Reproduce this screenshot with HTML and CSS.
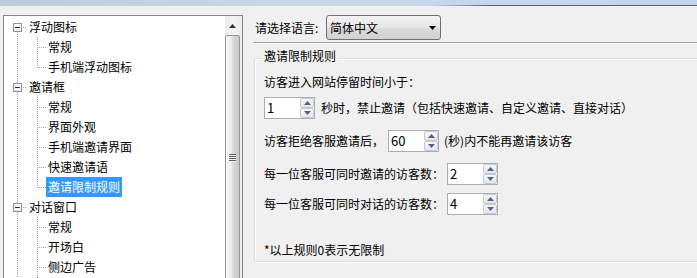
FILE: index.html
```html
<!DOCTYPE html>
<html lang="zh-CN">
<head>
    <meta charset="UTF-8">
    <title>邀请限制规则</title>
    <link rel="stylesheet" href="styles.css">
</head>
<body>
    <div class="titlebar"></div>
    <div class="main">
        <div class="treebox">
            <ul class="tree">
                <li class="root">
                    <div class="row"><span class="toggle"></span><span class="dash"></span><span class="label">浮动图标</span></div>
                    <ul class="children">
                        <li><span class="label">常规</span></li>
                        <li><span class="label">手机端浮动图标</span></li>
                    </ul>
                </li>
                <li class="root">
                    <div class="row"><span class="toggle"></span><span class="dash"></span><span class="label">邀请框</span></div>
                    <ul class="children">
                        <li><span class="label">常规</span></li>
                        <li><span class="label">界面外观</span></li>
                        <li><span class="label">手机端邀请界面</span></li>
                        <li><span class="label">快速邀请语</span></li>
                        <li class="selected"><span class="label">邀请限制规则</span></li>
                    </ul>
                </li>
                <li class="root">
                    <div class="row"><span class="toggle"></span><span class="dash"></span><span class="label">对话窗口</span></div>
                    <ul class="children more">
                        <li><span class="label">常规</span></li>
                        <li><span class="label">开场白</span></li>
                        <li><span class="label">侧边广告</span></li>
                    </ul>
                </li>
            </ul>
            <div class="scrollbar">
                <div class="sb-up">
                    <svg width="7" height="4" viewBox="0 0 7 4"><path d="M0 4H7L3.5 0Z" fill="#333"/></svg>
                </div>
                <div class="sb-thumb"><span class="grip"></span></div>
            </div>
        </div>

        <div class="pane">
            <div class="lang-row">
                <span class="lang-label">请选择语言:</span>
                <div class="select">
                    <span>简体中文</span>
                    <svg class="caret" width="7" height="4" viewBox="0 0 7 4"><path d="M0 0H7L3.5 4Z" fill="#000"/></svg>
                </div>
            </div>
            <div class="sep"></div>

            <fieldset class="group">
                <legend>邀请限制规则</legend>
                <div class="line first">访客进入网站停留时间小于：</div>
                <div class="line stay">
                    <div class="spin">
                        <span class="val">1</span>
                        <span class="btns">
                            <span class="btn"><svg width="7" height="4" viewBox="0 0 7 4"><path d="M0 4H7L3.5 0Z"/></svg></span>
                            <span class="btn"><svg width="7" height="4" viewBox="0 0 7 4"><path d="M0 0H7L3.5 4Z"/></svg></span>
                        </span>
                    </div>
                    <span class="after">秒时，禁止邀请（包括快速邀请、自定义邀请、直接对话）</span>
                </div>
                <div class="line refuse">
                    <span>访客拒绝客服邀请后，</span>
                    <div class="spin">
                        <span class="val">60</span>
                        <span class="btns">
                            <span class="btn"><svg width="7" height="4" viewBox="0 0 7 4"><path d="M0 4H7L3.5 0Z"/></svg></span>
                            <span class="btn"><svg width="7" height="4" viewBox="0 0 7 4"><path d="M0 0H7L3.5 4Z"/></svg></span>
                        </span>
                    </div>
                    <span class="after">(秒)内不能再邀请该访客</span>
                </div>
                <div class="line invite">
                    <span>每一位客服可同时邀请的访客数：</span>
                    <div class="spin">
                        <span class="val">2</span>
                        <span class="btns">
                            <span class="btn"><svg width="7" height="4" viewBox="0 0 7 4"><path d="M0 4H7L3.5 0Z"/></svg></span>
                            <span class="btn"><svg width="7" height="4" viewBox="0 0 7 4"><path d="M0 0H7L3.5 4Z"/></svg></span>
                        </span>
                    </div>
                </div>
                <div class="line chat">
                    <span>每一位客服可同时对话的访客数：</span>
                    <div class="spin">
                        <span class="val">4</span>
                        <span class="btns">
                            <span class="btn"><svg width="7" height="4" viewBox="0 0 7 4"><path d="M0 4H7L3.5 0Z"/></svg></span>
                            <span class="btn"><svg width="7" height="4" viewBox="0 0 7 4"><path d="M0 0H7L3.5 4Z"/></svg></span>
                        </span>
                    </div>
                </div>
                <div class="note">*以上规则0表示无限制</div>
            </fieldset>
        </div>
    </div>
</body>
</html>
```

FILE: styles.css
```css
* {
    box-sizing: border-box;
}

body {
    margin: 0;
    width: 697px;
    height: 278px;
    overflow: hidden;
    background: #f0f0f0;
    color: #000;
    font-family: "Noto Sans CJK SC", "Noto Sans", sans-serif;
    font-size: 12px;
    line-height: 16px;
}

.titlebar {
    height: 6px;
    background: linear-gradient(to right, #bccbdb, #c9d8e8 40%, #c2d6ec);
    border-bottom: 1px solid;
    border-image: linear-gradient(to right, rgba(86, 104, 122, 0) 62%, #56687a 70%) 1;
}

.main {
    display: flex;
    padding-top: 9px;
}

/* tree */

.treebox {
    flex-shrink: 0;
    display: flex;
    width: 240px;
    height: 266px;
    margin-left: 3px;
    border: 1px solid #828790;
    background: #fff;
}

.tree {
    flex: 1;
    margin: 0;
    padding: 1px 0 0;
    list-style: none;
    background: repeating-linear-gradient(to bottom, #a0a0a0 0 1px, transparent 1px 2px) 13px 12px / 1px 100% no-repeat;
}

.tree ul {
    margin: 0;
    padding: 0;
    list-style: none;
}

.row {
    display: flex;
    align-items: center;
    height: 20px;
    padding-left: 9px;
}

.toggle {
    width: 9px;
    height: 9px;
    border: 1px solid #919191;
    background:
        linear-gradient(#2b2b2b, #2b2b2b) center / 5px 1px no-repeat,
        linear-gradient(#fff, #ececec);
}

.dash {
    width: 5px;
    height: 1px;
    background: repeating-linear-gradient(to right, transparent 0 1px, #a0a0a0 1px 2px);
}

.label {
    padding: 0 2px;
    line-height: 20px;
    white-space: nowrap;
}

.children {
    background: repeating-linear-gradient(to bottom, #a0a0a0 0 1px, transparent 1px 2px) 33px 0 / 1px calc(100% - 10px) no-repeat;
}

/* the list goes on below the visible area */
.tree ul.more {
    padding-bottom: 20px;
    background-size: 1px 100%;
}

.children li {
    display: flex;
    height: 20px;
    padding-left: 42px;
    background: repeating-linear-gradient(to right, #a0a0a0 0 1px, transparent 1px 2px) 33px 10px / 9px 1px no-repeat;
}

.children li.selected .label {
    background: #3399ff;
    color: #fff;
}

/* scrollbar */

.scrollbar {
    width: 17px;
    display: flex;
    flex-direction: column;
    padding-right: 2px;
    background: linear-gradient(to right, #ebebeb, #f4f4f4 50%, #ebebeb);
}

.sb-up {
    height: 19px;
    display: flex;
    align-items: center;
    justify-content: center;
    padding-top: 1px;
}

.sb-up svg {
    display: block;
}

.sb-thumb {
    flex: 1;
    display: flex;
    align-items: center;
    justify-content: center;
    border: 1px solid #979797;
    border-radius: 2px;
    background: linear-gradient(to right, #f7f7f7, #ececec 40%, #d8d8d8 55%, #c9c9c9);
}

.grip {
    width: 7px;
    height: 8px;
    background: repeating-linear-gradient(to bottom, #5c5c5c 0 1px, #f4f4f4 1px 2px);
}

/* right pane */

.pane {
    flex: 1;
    min-width: 0;
    padding-left: 10px;
}

.lang-row {
    display: flex;
    align-items: center;
    height: 25px;
    padding-left: 2px;
}

.lang-label {
    width: 71px;
    flex-shrink: 0;
}

.select {
    display: flex;
    align-items: center;
    width: 115px;
    height: 25px;
    padding: 0 4px 0 3px;
    border: 1px solid #707070;
    border-radius: 3px;
    background: linear-gradient(#f3f3f3, #e6e6e6 50%, #dadada 55%, #d2d2d2);
}

.caret {
    margin-left: auto;
    display: block;
}

.sep {
    height: 2px;
    margin-top: 2px;
    border-top: 1px solid #a0a0a0;
    border-bottom: 1px solid #fff;
}

.group {
    width: 460px;
    margin: 5px 0 0 1px;
    padding: 0 0 3px 9px;
    border: 1px solid #d5dfe5;
    border-radius: 3px;
    box-shadow: inset 1px 1px 0 #fff, 1px 1px 0 #fff;
}

.group legend {
    margin-left: -2px;
    padding: 0 2px 4px;
    line-height: 14px;
}

.line {
    display: flex;
    align-items: center;
    white-space: nowrap;
}

.line.first {
    margin-top: 7px;
}

.line.stay {
    margin-top: 7px;
}

.line.refuse,
.line.invite {
    margin-top: 11px;
}

.line.chat {
    margin-top: 8px;
}

.stay .after {
    margin-left: 6px;
}

.refuse .spin {
    margin-left: 4px;
}

.refuse .after {
    margin-left: 5px;
}

.invite .spin,
.chat .spin {
    margin-left: 3px;
}

.spin {
    display: flex;
    width: 51px;
    height: 22px;
    border: 1px solid #abadb3;
    background: #fff;
}

.val {
    flex: 1;
    padding-left: 2px;
    line-height: 20px;
    font-size: 13px;
}

.btns {
    display: flex;
    flex-direction: column;
    width: 14px;
}

.btn {
    flex: 1;
    display: flex;
    align-items: center;
    justify-content: center;
    border: 1px solid #c6c9d0;
    border-radius: 2px;
    background: linear-gradient(#f7f7f7, #e4e6ea);
}

.btn svg {
    display: block;
    fill: #50628f;
}

.note {
    margin-top: 27px;
}
```
